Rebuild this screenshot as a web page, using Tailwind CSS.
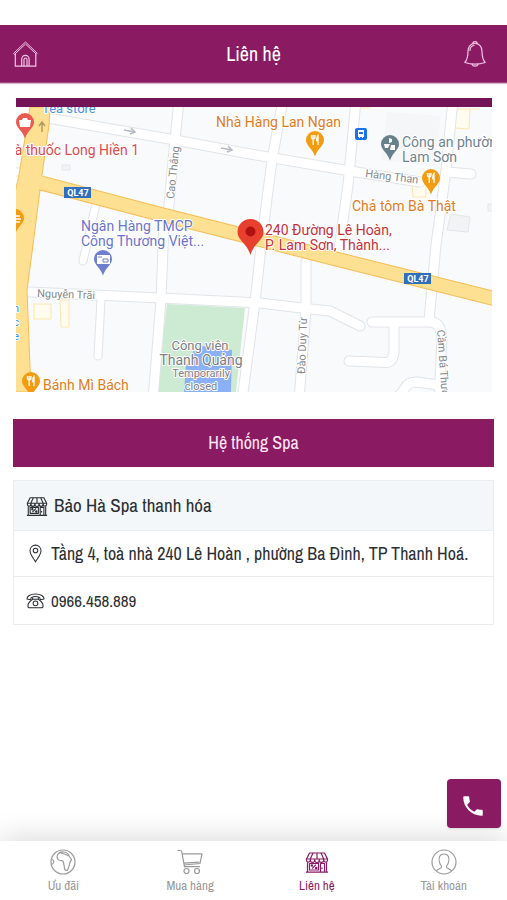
<!DOCTYPE html>
<html lang="vi">
<head>
  <meta charset="UTF-8">
  <meta name="viewport" content="width=device-width, initial-scale=1.0">
  <title>Liên hệ - Bảo Hà Spa</title>
  <script src="https://cdn.jsdelivr.net/npm/@tailwindcss/browser@4"></script>
</head>
<body class="bg-white min-h-screen flex flex-col text-[#2b2f33] font-['Archivo_Narrow','Liberation_Sans_Narrow','Liberation_Sans',sans-serif]">

  <!-- Shared icons -->
  <svg class="hidden" aria-hidden="true">
    <symbol id="icon-store" viewBox="0 0 24 24">
      <g fill="none" stroke="currentColor" stroke-width="1.2" stroke-linejoin="round">
        <path d="M4.500 3h15l3 6v1.200a1.900 1.900 0 0 1-3.800 0 2.200 2.200 0 0 1-4.400 0 2.300 2.300 0 0 1-4.600 0 2.200 2.200 0 0 1-4.400 0 1.900 1.900 0 0 1-3.800 0V9z"/>
        <path d="M1.500 9h21M8 3 5.300 9v1.500M12 3v6M16 3l2.700 6v1.500M9.700 9v1.500M14.300 9v1.500"/>
        <path d="M2.500 12.200v9.800M21.500 12.200v9.800M1 22.200h22M15.500 22v-8.500h4V22M4.500 13.500h9v6.500h-9z"/>
        <path d="m7 18.700 4-4M17 17.500v1.500"/>
        <circle cx="6.900" cy="15.500" r=".7"/>
        <circle cx="11.200" cy="18" r=".7"/>
      </g>
    </symbol>
    <symbol id="icon-fork" viewBox="0 0 12 12">
      <path fill="none" stroke="#fff" stroke-width="1.300" d="M2.500 1v3.500M4.200 1v10M5.900 1v3.500M2.500 4.500h3.400M9 11V1.500C7.800 2.500 7.600 4 7.700 6.500H9"/>
    </symbol>
    <symbol id="pin" viewBox="0 0 20 28">
      <path fill="currentColor" d="M10 1a9 9 0 0 1 9 9c0 5.500-6 8-9 16.500C7 18 1 15.500 1 10a9 9 0 0 1 9-9z"/>
    </symbol>
  </svg>

  <!-- Header -->
  <header class="mt-[25px] h-[58px] px-3 flex items-center justify-between bg-[#8a1b63] text-white border-b border-[#a04a82] shadow-[0_1px_1px_#d9b5cd]">
    <a href="#home" aria-label="Trang chủ" class="w-10">
      <svg class="size-7" viewBox="0 0 28 28" fill="none" stroke="#f4c4e6" stroke-width="1.200" stroke-linejoin="round" stroke-linecap="round">
        <path d="M1.800 13.200 13.500 2l11.700 11.200-.9 1L13.500 4 2.700 14.200z" stroke-width="1"/>
        <path d="M3.300 14v12.200h20.500V14M9.700 26v-7a3.700 3.700 0 0 1 7.400 0v7M12 26v-6.500a1.500 1.500 0 0 1 3 0V26"/>
      </svg>
    </a>
    <h1 class="text-xl">Liên hệ</h1>
    <button type="button" aria-label="Thông báo" class="w-10 flex justify-center">
      <svg class="size-7" viewBox="0 0 28 28" fill="none" stroke="#f4c4e6" stroke-width="1.200" stroke-linejoin="round" stroke-linecap="round">
        <path d="M14 3.500c-4.700 0-7 3.500-7 7.700 0 6-1 8.800-3.200 11.300 6 2 14.400 2 20.400 0C22 20 21 17.200 21 11.200c0-4.200-2.300-7.700-7-7.700z"/>
        <path d="M11.800 3.800a2.200 2.200 0 0 1 4.400 0M11 24.200c.4 1.300 1.500 2 3 2s2.600-.7 3-2M9 10.500c0-2.700 1.500-4.700 4-5"/>
      </svg>
    </button>
  </header>

  <main class="flex-1 pt-[15px] pb-6">
    <!-- Map -->
    <div class="ml-4 mr-[15px] border-t-[9px] border-[#741458]">
      <svg class="block w-full" viewBox="16 107 476 285" role="img" aria-label="Bản đồ 240 Đường Lê Hoàn" font-family="Roboto, sans-serif" font-size="13">
        <defs>
          <g id="streets" fill="none" stroke-linecap="round" stroke-linejoin="round">
            <path d="M48 118 175 140 250 154 350 171 420 182M446 172 471 174"/>
            <path d="M179 100 174 150 168 216M164 222 161 300 153 400"/>
            <path d="M283 100 272 160 262 238 255 302 242 400"/>
            <path d="M356 100 348 185 338 256M306 262 306 310 299 400"/>
            <path d="M453 100 446 170 436 245 429 320"/>
            <path d="M30 292 160 298 260 303 310 309 330 311 338 315 360 326"/>
            <path d="M372 322 H430Q441 322 442 338L439 400"/>
            <path d="M394 323 V352Q393 363 385 362.500L349 361"/>
            <path d="M386 402Q400 398 405 388 408 382 417 382L438 385"/>
          </g>
          <g id="lanes" fill="none" stroke-linecap="round">
            <path d="M101 300 98 356M96 204 83 261M16 172h3"/>
          </g>
        </defs>
        <rect x="16" y="107" width="476" height="285" fill="#f8fafc"/>
        <g fill="#f1f3f5" stroke="#e4e7ea">
          <path d="M387 112 441 116 434 166 381 160z" fill="#f4f6f8" stroke="none"/>
          <path d="M451 214 470 217 468 232 447 230zM488 204h6v7h-6zM62 165h8v5h-8z"/>
        </g>
        <g fill="#fffbef" stroke="#fbe6b0">
          <path d="M34 304h17v15H34zM60 300h9v27h-8zM455 109h15l-1 20-15-1zM412 183h14v14h-13z"/>
          <path d="M360 108h10M470 109h10"/>
        </g>
        <path d="M167 304 245 308 236 392H156z" fill="#cdebd3"/>
        <path d="M202 346 232 350 231 392H184L186 364H193V350H202z" fill="#8ab0f5"/>

        <use href="#streets" stroke="#e1e4e8" stroke-width="11"/>
        <use href="#lanes" stroke="#e1e4e8" stroke-width="9"/>
        <use href="#streets" stroke="#fff" stroke-width="9"/>
        <use href="#lanes" stroke="#fff" stroke-width="7"/>

        <!-- QL47 -->
        <g stroke-linejoin="round">
          <path d="M30 107H50L49 125 41 182 33 245 27 290 31 392H10V215L19 175z" fill="#fee092" stroke="#f5bd55"/>
          <path d="M41 183 163 215 250 237 340 260 500 300" fill="none" stroke="#f5bd55" stroke-width="15"/>
          <path d="M34 181 163 215 250 237 340 260 500 300" fill="none" stroke="#fee092" stroke-width="13"/>
        </g>
        <g fill="none" stroke="#b4b9c6" stroke-width="1.500">
          <path d="M124 130 135 132M131 128 135 132 130 134M221 148 232 150M228 146 232 150 227 152"/>
          <path d="M42 132V122M39 126 42 122 45 126" stroke="#b39a63"/>
        </g>
        <g fill="#2f6fbd">
          <rect x="64" y="187" width="27" height="11"/>
          <rect x="404" y="273" width="27" height="11"/>
        </g>
        <g fill="#fff" font-size="9" font-weight="700" text-anchor="middle">
          <text x="78" y="196">QL47</text>
          <text x="418" y="282">QL47</text>
        </g>

        <!-- Street names -->
        <g fill="#85898d" stroke="#fff" stroke-width="2" paint-order="stroke" font-size="11">
          <text transform="translate(174 199) rotate(-84)">Cao Thắng</text>
          <text transform="translate(365 177) rotate(7)">Hàng Than</text>
          <text transform="translate(37 297) rotate(2)">Nguyễn Trãi</text>
          <text transform="translate(305 374) rotate(-88)">Đào Duy Từ</text>
          <text transform="translate(437 330) rotate(86)">Cầm Bá Thước</text>
        </g>

        <!-- Pins -->
        <use href="#pin" x="15" y="112" width="20" height="28" color="#ea5a52"/>
        <path d="M19 120h3l1-2h4l1 2h3l-1 7H20z" fill="#fff"/>
        <use href="#pin" x="305" y="130" width="20" height="28" color="#f39c12"/>
        <use href="#icon-fork" x="309" y="134" width="12" height="12"/>
        <use href="#pin" x="421" y="168" width="20" height="28" color="#f39c12"/>
        <use href="#icon-fork" x="425" y="172" width="12" height="12"/>
        <use href="#pin" x="5" y="208" width="20" height="28" color="#f39c12"/>
        <path d="M16 216h4M16 219h5M16 222h4" stroke="#fff" stroke-width="1.500"/>
        <use href="#pin" x="21" y="371" width="20" height="28" color="#f39c12"/>
        <use href="#icon-fork" x="25" y="375" width="12" height="12"/>
        <use href="#pin" x="380" y="134" width="20" height="28" color="#66808c"/>
        <path d="m389 138 3 1v3l-3 1zM384 144h6l-2 4h-3zM391 145h4v5h-5z" fill="#fff"/>
        <use href="#pin" x="93" y="249" width="20" height="28" color="#6f7fd0"/>
        <path d="M97 255h13v9H97z" fill="#fff"/>
        <path d="M98 257h4M103 259h5v3h-5z" fill="none" stroke="#6f7fd0"/>
        <rect x="355" y="128" width="12" height="12" rx="2" fill="#1a73e8"/>
        <path d="M358 130h6v7h-1v1h-1v-1h-2v1h-1v-1h-1z" fill="#fff"/>
        <path d="M359 132h4v2h-4z" fill="#1a73e8"/>

        <!-- Places -->
        <g stroke="#fff" stroke-width="2" paint-order="stroke" stroke-linejoin="round">
          <text x="42" y="113" fill="#4a90e2">Tea store</text>
          <text x="139" y="155" fill="#dd4b4b" font-size="14" text-anchor="end">Nhà thuốc Long Hiền 1</text>
          <text x="216" y="127" fill="#dc7d1e" font-size="14">Nhà Hàng Lan Ngan</text>
          <g fill="#6d838f" font-size="14">
            <text x="402" y="147">Công an phường</text>
            <text x="402" y="162">Lam Sơn</text>
          </g>
          <text x="352" y="211" fill="#dc7d1e" font-size="14">Chả tôm Bà Thật</text>
          <g fill="#6a75cc" font-size="14">
            <text x="81" y="231">Ngân Hàng TMCP</text>
            <text x="81" y="246">Công Thương Việt...</text>
          </g>
          <g fill="#c5303a" font-size="14">
            <text x="265" y="235">240 Đường Lê Hoàn,</text>
            <text x="265" y="250">P. Lam Sơn, Thành...</text>
          </g>
          <text x="43" y="390" fill="#dc7d1e" font-size="14">Bánh Mì Bách</text>
          <g fill="#3f8fe0" font-size="11" text-anchor="end">
            <text x="19" y="312">n</text>
            <text x="19" y="326">c</text>
            <text x="19" y="340">e</text>
          </g>
          <g fill="#7a8086" text-anchor="middle">
            <text x="200" y="350">Công viên</text>
            <text x="201" y="365" font-size="14">Thanh Quảng</text>
            <text x="201" y="377" font-size="11">Temporarily</text>
            <text x="201" y="390" font-size="11">closed</text>
          </g>
        </g>
        <path d="M250.500 219c7.500 0 13 5.800 13 13 0 8.500-9.500 11-13 23-3.500-12-13-14.500-13-23 0-7.200 5.500-13 13-13z" fill="#e8402f"/>
        <circle cx="250.500" cy="231.500" r="5" fill="#b01212"/>
      </svg>
    </div>

    <!-- Spa list -->
    <section class="mx-[13px] mt-[27px]">
      <button type="button" class="block w-full h-12 bg-[#8a1b63] text-[#fbe6f5] text-lg">Hệ thống Spa</button>
      <div class="mt-[13px] border border-[#e9edf0] divide-y divide-[#e9edf0]">
        <h2 class="h-[50px] px-3 flex items-center gap-1.5 bg-[#f3f7fa] text-[19px]">
          <svg class="w-[22px] h-[22px]"><use href="#icon-store"/></svg>
          Bảo Hà Spa thanh hóa
        </h2>
        <p class="min-h-[46px] px-3 flex items-center gap-1.5 text-lg leading-6">
          <svg class="size-[19px] shrink-0" viewBox="0 0 20 20" fill="none" stroke="currentColor" stroke-width="1.100">
            <path d="M10 1.200a5.800 5.800 0 0 1 5.800 5.800c0 3.800-3.300 7.500-5.800 11.800C7.500 14.500 4.200 10.800 4.200 7A5.800 5.800 0 0 1 10 1.200z"/>
            <circle cx="10" cy="6.800" r="2.400"/>
          </svg>
          Tầng 4, toà nhà 240 Lê Hoàn , phường Ba Đình, TP Thanh Hoá.
        </p>
        <p class="min-h-[47px] px-3 flex items-center gap-1.5 text-[17px] leading-6">
          <svg class="size-[19px] shrink-0" viewBox="0 0 20 20" fill="none" stroke="currentColor" stroke-width="1.100" stroke-linejoin="round">
            <path d="M1 8.500C.8 5.500 4.500 3.200 10 3.200s9.200 2.300 9 5.300l-3.800.7-.9-2.500c-2.500-1-6.100-1-8.600 0l-.9 2.500z"/>
            <path d="M7 6.500v2.200C4.500 10.500 2 12.500 2 15.500c0 1.500.5 2.200 2 2.200h12c1.500 0 2-.7 2-2.200 0-3-2.500-5-5-6.800V6.500M7 8.700h6"/>
            <circle cx="10" cy="13" r="2.500"/>
          </svg>
          <a href="tel:0966458889">0966.458.889</a>
        </p>
      </div>
    </section>
  </main>

  <!-- Call button -->
  <a href="tel:0966458889" aria-label="Gọi điện" class="fixed z-10 right-1.5 bottom-[72px] w-[54px] h-[49px] rounded flex items-center justify-center bg-[#8a1b63] shadow-sm">
    <svg class="size-[26px] mt-1 mr-0.5" viewBox="0 0 24 24" fill="#fff">
      <path d="M6.620 10.790c1.440 2.830 3.760 5.140 6.590 6.590l2.200-2.200c.27-.27.67-.36 1.020-.24 1.120.37 2.330.57 3.570.57.55 0 1 .45 1 1V20c0 .55-.45 1-1 1-9.390 0-17-7.610-17-17 0-.55.45-1 1-1h3.500c.55 0 1 .45 1 1 0 1.250.2 2.450.57 3.570.11.35.03.74-.25 1.020z"/>
    </svg>
  </a>

  <!-- Bottom navigation -->
  <nav class="sticky bottom-0 h-[59px] pt-[7px] grid grid-cols-4 bg-white text-[#999] text-[13px] leading-5 shadow-[0_-4px_28px_rgba(0,0,0,0.14)]">
    <a href="#uu-dai" class="flex flex-col items-center">
      <svg class="size-7" viewBox="0 0 28 28" fill="none" stroke="currentColor" stroke-width="1.200" stroke-linejoin="round">
        <circle cx="14" cy="14" r="12"/>
        <path d="M9 6c1.500-1.800 4-2.500 6-2 2.500.3 4.500 1.500 5 4l2.500 3.500c-.5 1.500-2 2.500-2 4.500 0 2.500-1.200 3-1.500 5-.5 2-2.800 2-3.300 0-.5-2.500-.7-5.500-1.700-8-1.500-.5-3.500 0-4.700-1.500C7.800 9.800 8 7.500 9 6z"/>
        <path d="M2.500 11.500c1.500.2 2.500 1.200 2.300 2.500s-1 2-2.300 2.300M11 4.200c2 1.800 5.500 1.300 8.500 3.800"/>
      </svg>
      Ưu đãi
    </a>
    <a href="#mua-hang" class="flex flex-col items-center">
      <svg class="size-7" viewBox="0 0 28 28" fill="none" stroke="currentColor" stroke-width="1.200" stroke-linejoin="round" stroke-linecap="round">
        <path d="M2 2.500h2.500Q5.500 2.500 5.800 4L8.500 18.700M6.300 5.800H26l-2 9.700-15.800 1.500M7.800 15.200l15-1"/>
        <path d="M8.500 18.700h15"/>
        <circle cx="10.500" cy="23" r="2.500"/>
        <circle cx="21" cy="23" r="2.500"/>
      </svg>
      Mua hàng
    </a>
    <a href="#lien-he" aria-current="page" class="flex flex-col items-center text-[#8a1b63]">
      <svg class="w-6 h-7"><use href="#icon-store"/></svg>
      Liên hệ
    </a>
    <a href="#tai-khoan" class="flex flex-col items-center">
      <svg class="size-7" viewBox="0 0 28 28" fill="none" stroke="currentColor" stroke-width="1.100" stroke-linejoin="round">
        <circle cx="14" cy="14" r="12"/>
        <path d="M6.500 23.200c.5-1.700 2.700-2.200 4.300-3.200.9-.6.9-2 .1-2.900-1.100-1.300-1.400-2.500-1.600-3.800-.8-4.100.4-7.300 4.700-7.300s5.500 3.200 4.700 7.300c-.2 1.300-.5 2.500-1.600 3.800-.8.900-.8 2.300.1 2.900 1.600 1 3.800 1.500 4.300 3.200"/>
      </svg>
      Tài khoản
    </a>
  </nav>
</body>
</html>
